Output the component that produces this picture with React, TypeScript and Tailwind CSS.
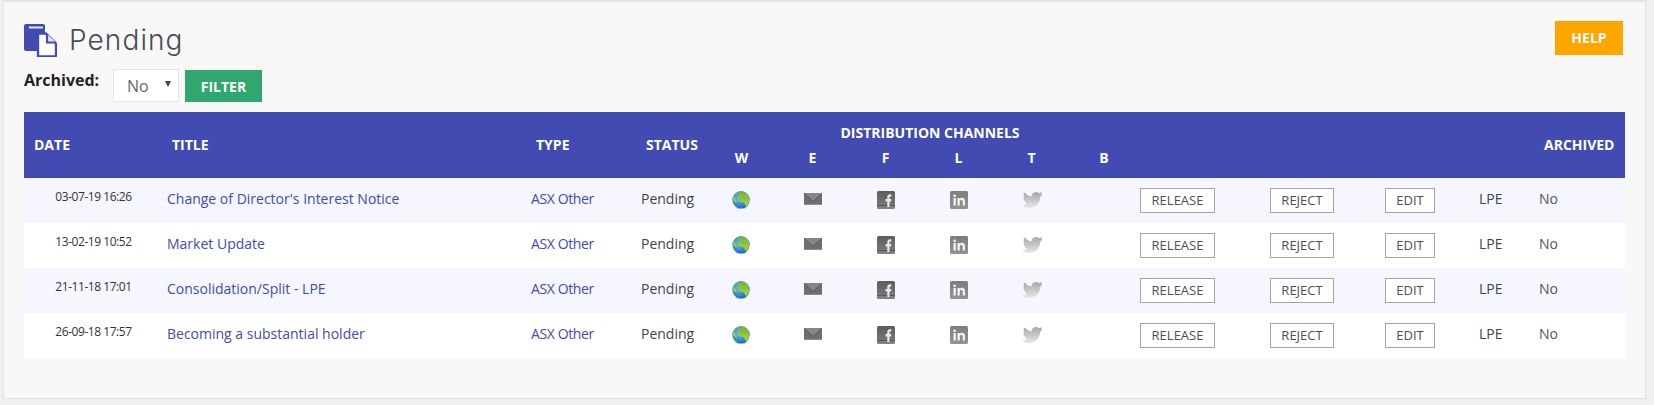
import React from "react";

const rows = [
  ["03-07-19 16:26", "Change of Director's Interest Notice"],
  ["13-02-19 10:52", "Market Update"],
  ["21-11-18 17:01", "Consolidation/Split - LPE"],
  ["26-09-18 17:57", "Becoming a substantial holder"],
];

const Doc = () => (
  <svg width="33" height="33" viewBox="0 0 33 33" className="block shrink-0">
    <path d="M2 0H19a2 2 0 0 1 2 2V9H13V27H2a2 2 0 0 1-2-2V2a2 2 0 0 1 2-2z" fill="#414bb2" />
    <rect x="5" y="2.5" width="14" height="2" fill="#e4e6f6" />
    <path d="M14 9.5H22L32 19.5V31a1.5 1.5 0 0 1-1.5 1.5H14z" fill="#fff" stroke="#414bb2" strokeWidth="2.4" strokeLinejoin="round" />
    <path d="M23 10V18.5H32" fill="#e4e6f6" stroke="#414bb2" strokeWidth="2.2" />
  </svg>
);

const Globe = () => (
  <svg width="18" height="18" viewBox="0 0 18 18" className="block">
    <defs>
      <radialGradient id="sea" cx="0.4" cy="0.4" r="0.7">
        <stop offset="0" stopColor="#6cc0ee" />
        <stop offset="0.65" stopColor="#2b86cf" />
        <stop offset="1" stopColor="#17599c" />
      </radialGradient>
      <linearGradient id="land" x1="0" y1="0" x2="0" y2="1">
        <stop offset="0" stopColor="#6fb52a" />
        <stop offset="1" stopColor="#b3d53a" />
      </linearGradient>
    </defs>
    <ellipse cx="9" cy="16.800" rx="6" ry="1.200" fill="#c9d2da" />
    <circle cx="9" cy="8.800" r="8.700" fill="url(#sea)" />
    <path d="M6 1.500C9 .2 13 .8 15.300 3.500c1.800 2.200 2.300 5 1.700 7.500-.5 1.500-1.300 2.700-2.500 3.700-1.200-.2-2-1.300-2.200-2.700-.2-1-1.500-1-2.800-1.300C8.200 10.400 6 10.400 5.500 9c-.4-1.100.6-1.700 1.600-2.200.9-.5.300-1.500-.5-2C6 4.300 5.300 2.300 6 1.500z" fill="url(#land)" />
    <path d="M1.500 5.500C2.700 6 3.500 7.500 4 9c.3 1 .9 1.700 1 2.600-.9.100-2.200-.5-3.100-1.800C1 8.500.8 6.900 1.500 5.500z" fill="#a2cf3c" />
    <path d="M10.500 6.500c1.200-.3 2.500 0 3.500.6-1 .5-2.500.5-3.500-.6z" fill="#3f9bd8" />
  </svg>
);

const Mail = () => (
  <svg width="18" height="12" viewBox="0 0 18 12" className="block">
    <rect width="18" height="12" fill="#6f6f6f" />
    <path d="M0 0H18L9 8z" fill="#868686" />
    <path d="M0 0L9 8L18 0V.9L9 9.200L0 .9z" fill="#5c5c5c" />
    <rect y="11" width="18" height="1" fill="#8c8c8c" />
  </svg>
);

const Fb = () => (
  <svg width="18" height="18" viewBox="0 0 18 18" className="block">
    <defs>
      <linearGradient id="fbg" x1="0" y1="0" x2="0" y2="1">
        <stop offset="0" stopColor="#5c5c5c" />
        <stop offset="0.75" stopColor="#767676" />
        <stop offset="1" stopColor="#858585" />
      </linearGradient>
    </defs>
    <rect width="18" height="18" rx="1.500" fill="url(#fbg)" />
    <rect y="14" width="18" height="0.8" fill="#4f4f4f" />
    <path d="M10.300 16V10.500H8.500V8H10.300V6.300C10.300 4.300 11.300 3.300 13 3.300H14.300V5.600H13.300C12.700 5.600 12.500 6 12.500 6.500V8H14.300L14 10.500H12.500V16z" fill="#e8e8e8" />
  </svg>
);

const In = () => (
  <svg width="18" height="18" viewBox="0 0 18 18" className="block">
    <defs>
      <linearGradient id="ing" x1="0" y1="0" x2="0" y2="1">
        <stop offset="0" stopColor="#7d7d7d" />
        <stop offset="1" stopColor="#949494" />
      </linearGradient>
    </defs>
    <rect width="18" height="18" rx="1.500" fill="url(#ing)" />
    <rect x="3.500" y="7" width="2.300" height="7.500" fill="#f2f2f2" />
    <circle cx="4.650" cy="4.800" r="1.350" fill="#f2f2f2" />
    <path d="M7.500 7H9.700V8C10.200 7.300 11 6.800 12.100 6.800 14 6.800 15 8 15 10.200V14.500H12.700V10.600C12.700 9.500 12.300 8.900 11.400 8.900 10.400 8.900 9.800 9.500 9.800 10.700V14.500H7.500z" fill="#f2f2f2" />
  </svg>
);

const Bird = () => (
  <svg width="19" height="18" viewBox="0 0 24 24" className="block">
    <defs>
      <linearGradient id="tw" x1="0" y1="0" x2="0" y2="1">
        <stop offset="0" stopColor="#aaaaaa" />
        <stop offset="1" stopColor="#e4e4e4" />
      </linearGradient>
    </defs>
    <path d="M23.953 4.57a10 10 0 01-2.825.775 4.958 4.958 0 002.163-2.723c-.951.555-2.005.959-3.127 1.184a4.92 4.92 0 00-8.384 4.482C7.69 8.095 4.067 6.13 1.64 3.162a4.822 4.822 0 00-.666 2.475c0 1.71.87 3.213 2.188 4.096a4.904 4.904 0 01-2.228-.616v.06a4.923 4.923 0 003.946 4.827 4.996 4.996 0 01-2.212.085 4.936 4.936 0 004.604 3.417 9.867 9.867 0 01-6.102 2.105c-.39 0-.779-.023-1.17-.067a13.995 13.995 0 007.557 2.209c9.053 0 13.998-7.496 13.998-13.985 0-.21 0-.42-.015-.63A9.935 9.935 0 0024 4.59z" fill="url(#tw)" stroke="url(#tw)" strokeWidth="1.800" strokeLinejoin="round" />
  </svg>
);

const Action = ({ w, children }: { w: string; children: React.ReactNode }) => (
  <button className={`${w} block h-[25px] border border-[#a3a3a3] bg-white text-[13px] leading-[23px] text-[#4a4f57]`}>
    {children}
  </button>
);

export default function App() {
  return (
    <div className="h-[405px] overflow-hidden bg-[#f0f0ef] pl-[3px] pr-[8px] font-['Open_Sans',sans-serif]">
      <div className="h-[399px] border border-t-2 border-[#e3e3e3] bg-[#f8f8f8] pl-[20px] pr-[19px] pt-[19px]">
        <div className="flex items-start justify-between">
          <div className="mt-[2px] flex items-center gap-[12px]">
            <Doc />
            <h1 className="font-['Inter',sans-serif] text-[28px] font-light leading-[34px] tracking-[1.1px] text-[#474c55]">Pending</h1>
          </div>
          <button className="mr-[3px] h-[34px] w-[68px] bg-[#fea500] pb-[2px] text-[14px] font-bold text-white">HELP</button>
        </div>
        <div className="mt-[12px] flex items-start">
          <label className="mt-[-1px] w-[89px] text-[16px] leading-[24px] font-bold text-[#222]">Archived:</label>
          <div className="relative h-[33px] w-[66px] border border-[#e5e5e5] bg-white pl-[13px] text-[16px] leading-[32px] text-[#666]">
            No
            <span className="absolute right-[7px] top-[11px] h-0 w-0 border-x-[3px] border-t-[6px] border-x-transparent border-t-[#444]" />
          </div>
          <button className="ml-[6px] mt-[1px] h-[32px] w-[77px] bg-[#30a76f] text-[14px] font-bold text-white">FILTER</button>
        </div>
        <table className="mt-[10px] w-[1601px] table-fixed text-[14px] text-[#333]">
          <colgroup>
            <col className="w-[138px]" />
            <col className="w-[364px]" />
            <col className="w-[110px]" />
            <col className="w-[71px]" />
            <col className="w-[69px]" />
            <col className="w-[73px]" />
            <col className="w-[73px]" />
            <col className="w-[73px]" />
            <col className="w-[73px]" />
            <col className="w-[72px]" />
            <col className="w-[125px]" />
            <col className="w-[115px]" />
            <col className="w-[95px]" />
            <col className="w-[59px]" />
            <col className="w-[91px]" />
          </colgroup>
          <thead className="bg-[#414bb2] text-[14px] font-bold text-white">
            <tr className="h-[33px]">
              <th rowSpan={2} className="pb-[2px] pl-[10px] text-left">DATE</th>
              <th rowSpan={2} className="pb-[2px] pl-[10px] text-left">TITLE</th>
              <th rowSpan={2} className="pb-[2px] pl-[10px] text-left">TYPE</th>
              <th rowSpan={2} className="pb-[2px] pl-[10px] text-left">STATUS</th>
              <th colSpan={6} className="pl-[13px] pt-[8px] text-center">DISTRIBUTION CHANNELS</th>
              <th rowSpan={2} />
              <th rowSpan={2} />
              <th rowSpan={2} />
              <th rowSpan={2} />
              <th rowSpan={2} className="pb-[2px] pl-[10px] text-left">ARCHIVED</th>
            </tr>
            <tr className="h-[33px]">
              {["W", "E", "F", "L", "T", "B"].map((c) => (
                <th key={c} className="pb-[8px] text-center">{c}</th>
              ))}
            </tr>
          </thead>
          <tbody>
            {rows.map(([date, title], i) => (
              <tr key={title} className={`h-[45px] ${i % 2 === 0 ? "bg-[#f5f6ff]" : "bg-white"}`}>
                <td className="pb-[7px] pl-[1px] text-center text-[12px] tracking-[-0.45px] text-[#333]">{date}</td>
                <td className="pb-[5px] pl-[5px] text-[#414bb2]">{title}</td>
                <td className="pb-[5px] pl-[5px] tracking-[-0.4px] text-[#414bb2]">ASX Other</td>
                <td className="pb-[5px] pl-[5px] text-[#444]">Pending</td>
                <td className="pb-[2px] pl-[25px]"><Globe /></td>
                <td className="pb-[3px] pl-[28px]"><Mail /></td>
                <td className="pb-[2px] pl-[28px]"><Fb /></td>
                <td className="pb-[2px] pl-[28px]"><In /></td>
                <td className="pb-[2px] pl-[28px]"><Bird /></td>
                <td />
                <td><Action w="w-[75px]">RELEASE</Action></td>
                <td className="pl-[5px]"><Action w="w-[64px]">REJECT</Action></td>
                <td className="pl-[5px]"><Action w="w-[50px]">EDIT</Action></td>
                <td className="pb-[5px] pl-[4px] text-[#444]">LPE</td>
                <td className="pb-[5px] pl-[5px] text-[#555]">No</td>
              </tr>
            ))}
          </tbody>
        </table>
      </div>
    </div>
  );
}
